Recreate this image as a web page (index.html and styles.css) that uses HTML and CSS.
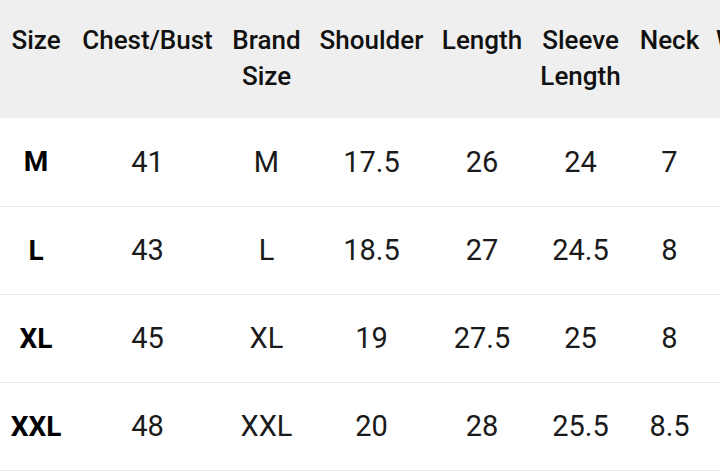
FILE: index.html
```html
<!DOCTYPE html>
<html>
<head>
<meta charset="utf-8">
<link rel="stylesheet" href="styles.css">
</head>
<body>
<div class="wrap">
<table class="sizes">
  <colgroup>
    <col class="c1"><col class="c2"><col class="c3"><col class="c4"><col class="c5"><col class="c6"><col class="c7"><col class="c8">
  </colgroup>
  <thead>
    <tr><th>Size</th><th>Chest/Bust</th><th>Brand Size</th><th>Shoulder</th><th>Length</th><th>Sleeve Length</th><th>Neck</th><th>Waist</th></tr>
  </thead>
  <tbody>
    <tr><td class="sz">M</td><td>41</td><td>M</td><td>17.5</td><td>26</td><td>24</td><td>7</td><td>38</td></tr>
    <tr><td class="sz">L</td><td>43</td><td>L</td><td>18.5</td><td>27</td><td>24.5</td><td>8</td><td>40</td></tr>
    <tr><td class="sz">XL</td><td>45</td><td>XL</td><td>19</td><td>27.5</td><td>25</td><td>8</td><td>42</td></tr>
    <tr><td class="sz">XXL</td><td>48</td><td>XXL</td><td>20</td><td>28</td><td>25.5</td><td>8.5</td><td>45</td></tr>
  </tbody>
</table>
</div>
</body>
</html>
```
FILE: styles.css
```css
html, body { margin: 0; padding: 0; background: #fff; }
body { overflow: hidden; font-family: Roboto, "Noto Sans", sans-serif; }
.wrap { width: 720px; height: 472px; overflow: hidden; }
.sizes { border-collapse: collapse; table-layout: fixed; width: 788px; }
.c1 { width: 72px; }
.c2 { width: 151px; }
.c3 { width: 87px; }
.c4 { width: 123px; }
.c5 { width: 98px; }
.c6 { width: 99px; }
.c7 { width: 79px; }
.c8 { width: 79px; }
.sizes th {
  background: #efefef;
  color: #111;
  font-weight: 500;
  font-size: 26px;
  line-height: 36px;
  height: 118px;
  padding: 22px 6px 0;
  box-sizing: border-box;
  text-align: center;
  vertical-align: top;
}
.sizes td {
  color: #1a1a1a;
  font-size: 29px;
  height: 88px;
  padding: 0 4px;
  box-sizing: border-box;
  text-align: center;
  vertical-align: middle;
  border-bottom: 1px solid #ebebeb;
}
.sizes td.sz { font-weight: 700; color: #000; font-size: 28px; }
```
